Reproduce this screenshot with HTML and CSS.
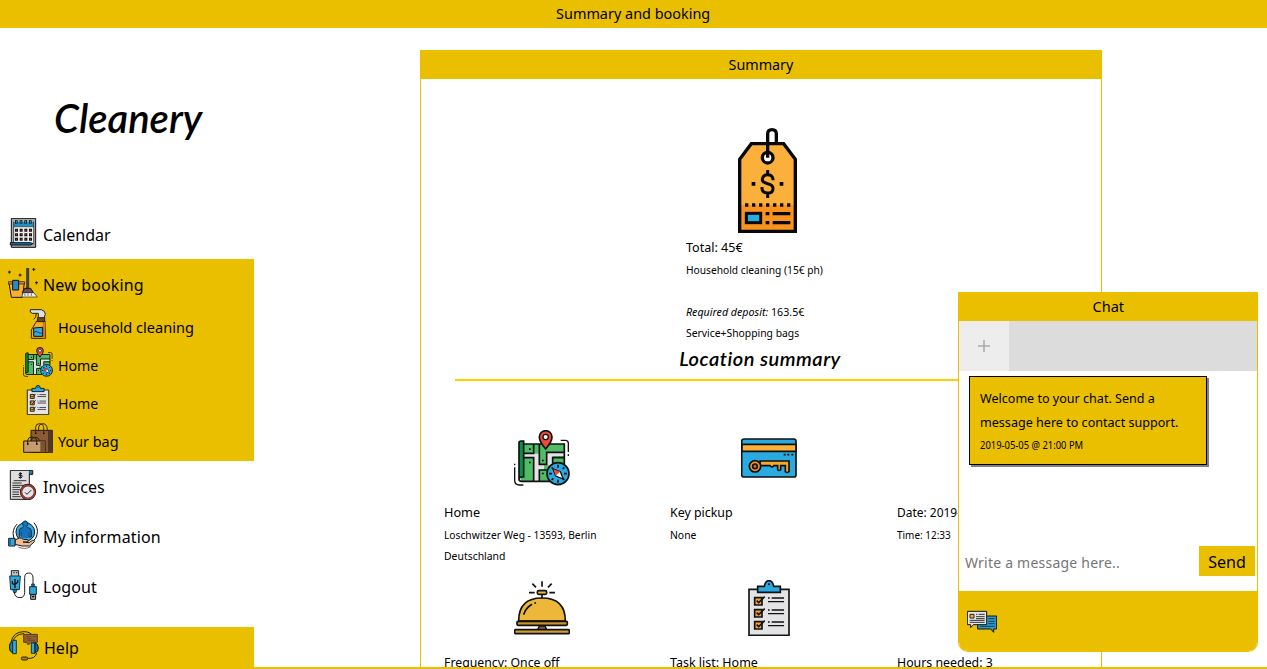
FILE: index.html
```html
<!DOCTYPE html>
<html lang="en">
<head>
<meta charset="utf-8">
<title>Summary and booking</title>
<link rel="stylesheet" href="styles.css">
</head>
<body>
<svg class="defs" width="0" height="0">
  <symbol id="map" viewBox="282 30 168 168">
    <path d="M302 72H433V184H302Z" fill="#50bc66"/>
    <path d="M311 101H358V132H378L382 98H434V108H398V136H372V149H358V184H341V113H311Z" fill="#e3e3e7"/>
    <path d="M297 68Q297 63 303 63H311V171H304Q298 172 297 177Z" fill="#079247"/>
    <g fill="none" stroke="#101010" stroke-width="5"><path d="M311 72H433V132M311 100H341V72M311 113H341V184M358 72V133H380V97H434M398 130V113H434M358 184V150H385M297 177V68Q297 63 303 63H311V171H304Q297 172 297 177Q297 184 304 184H390"/><path d="M422 61H436Q445 61 445 70V96M445 103V108M284 131V136M284 142V181Q284 195 298 195H310" stroke-width="4"/></g>
    <path d="M327 85h5v5h-5zM327 125h5v5h-5zM366 119h5v5h-5zM366 158h5v5h-5z"/>
    <path d="M377 87Q358 65 358 51A19 19 0 0 1 396 51Q396 65 377 87Z" fill="#e64c3c" stroke="#111" stroke-width="5"/><circle cx="377" cy="51" r="8" fill="#fff" stroke="#111" stroke-width="4"/>
    <circle cx="414" cy="161" r="33" fill="#29a9e1" stroke="#111" stroke-width="5"/><path d="M414 134v9M414 179v9M387 161h9M432 161h9M395 142l5 5M428 175l5 5M395 180l5-5M428 147l5-5" stroke="#111" stroke-width="5"/><path d="M399 147L421 155L430 177L407 168Z" fill="#fff" stroke="#111" stroke-width="4"/><path d="M400 148L421 155L407 167Z" fill="#e64c3c"/>
  </symbol>
  <symbol id="list" viewBox="243 480 168 168">
    <path d="M267 508H387V646H267Z" fill="#e4e4e6" stroke="#151515" stroke-width="5"/>
    <path d="M293 517V499H313Q316 482 327 482T341 499H361V517Z" fill="#29a9e1" stroke="#111" stroke-width="5"/><circle cx="327" cy="493" r="3"/>
    <g id="check"><path d="M284 533H306V555H284Z" fill="#f6a52d" stroke="#111" stroke-width="5"/><path d="M290 542L296 548L314 530" fill="none" stroke="#111" stroke-width="5"/><path d="M324 534h5M335 534h37M324 545h48" stroke="#111" stroke-width="4"/></g>
    <use href="#check" y="36"/><use href="#check" y="72"/>
  </symbol>
</svg>
<div class="page">
  <header class="topbar"><span class="t-top">Summary and booking</span></header>
  <div class="main">
    <nav class="sidebar">
      <div class="logo"><span class="t-logo">Cleanery</span></div>
      <a class="item">
        <svg viewBox="24 414 90 90"><path d="M34 415H107V502H34Z" fill="#aaa9a5" stroke="#111" stroke-width="3"/><path d="M41 425H101V494H41Z" fill="#eee"/><path d="M41 425H101V439H41Z" fill="#1b91c8"/><path d="M41 494V425M101 425V494M41 440H101" stroke="#111" stroke-width="2"/><path d="M49 421v10M63 421v10M77 421v10M91 421v10" stroke="#111" stroke-width="8"/><path d="M49 423v7M63 423v7M77 423v7M91 423v7" stroke="#299fd0" stroke-width="3"/><path d="M45 451H98M45 464H98M45 478H98" stroke="#151515" stroke-width="9" stroke-dasharray="9 5"/><path d="M48 451H98M48 464H98M48 478H98" stroke="#993d31" stroke-width="3" stroke-dasharray="3 11"/><path d="M31 488H92L99 491L92 495H31Z" fill="#0878bd" stroke="#111" stroke-width="3"/></svg>
        <span class="t-cal">Calendar</span></a>
      <div class="group">
        <a class="item">
          <svg viewBox="24 30 90 90"><path d="M27 75H73L67 118H34Z" fill="#f8af32" stroke="#211" stroke-width="3"/><path d="M25 71H74V78H25Z" fill="#e58726" stroke="#211" stroke-width="2"/><path d="M38 67H56V96H38Z" fill="#258bc4" stroke="#111" stroke-width="3"/><path d="M80 31H86V92H80Z" fill="#4e4a47" stroke="#181818" stroke-width="2"/><path d="M74 91H92L100 104H67Z" fill="#66524a" stroke="#211" stroke-width="3"/><path d="M69 104H101L112 117H65Z" fill="#eee" stroke="#222" stroke-width="2"/><path d="M75 106v8M84 106v8M94 106v8" stroke="#444" stroke-width="2"/><path d="M28 38v9M24 42h9M60 47v9M56 51h9M101 30v9M97 34h9M109 70v9M105 74h9" stroke="#211" stroke-width="3"/></svg>
          <span class="t-new">New booking</span></a>
        <a class="sub">
          <svg viewBox="69 152 90 90"><path d="M110 188H135L137 240H94V215Z" fill="#f5ae24" stroke="#2d210c" stroke-width="3"/><path d="M128 190H136V240H128Z" fill="#d47d18"/><path d="M113 177H134V190H113Z" fill="#76401c" stroke="#221" stroke-width="3"/><path d="M91 154H124Q137 158 136 168L132 178H115V165H97L91 161Z" fill="#dce0e3" stroke="#222" stroke-width="3"/><path d="M109 166Q108 180 101 183" fill="none" stroke="#332410" stroke-width="3"/><path d="M101 209L128 207V234H101Z" fill="#35a7dc" stroke="#111" stroke-width="3"/><path d="M102 222q7-6 13 0t13 0" fill="none" stroke="#173f5f" stroke-width="3"/></svg>
          <span class="t-house">Household cleaning</span></a>
        <a class="sub"><svg><use href="#map"/></svg><span class="t-home">Home</span></a>
        <a class="sub"><svg><use href="#list"/></svg><span class="t-home">Home</span></a>
        <a class="sub">
          <svg viewBox="69 237 90 90"><path d="M93 259H157V326H93Z" fill="#8b5b33" stroke="#211710" stroke-width="3"/><path d="M144 260H158V326H144Z" fill="#533522"/><path d="M107 269V250Q107 239 119 239T131 250V269M116 258V249Q118 239 128 239Q142 239 142 258" fill="none" stroke="#3b290f" stroke-width="3"/><path d="M71 291H136V325H71Z" fill="#c69b6d" stroke="#211710" stroke-width="3"/><path d="M121 292H136V325H121Z" fill="#795334"/><path d="M83 302V289Q84 279 96 279T110 289V302M94 290Q95 280 104 280Q117 280 119 290" fill="none" stroke="#29200e" stroke-width="3"/><path d="M81 300h5M108 300h5M105 268h5M129 268h5" stroke="#111" stroke-width="4"/></svg>
          <span class="t-bag">Your bag</span></a>
      </div>
      <a class="item">
        <svg viewBox="24 30 90 90"><path d="M31 31H98V43H88V118H31Z" fill="#dedede" stroke="#151515" stroke-width="3"/><path d="M88 43V35Q88 31 93 31T98 35V42Z" fill="#157fc3" stroke="#111" stroke-width="2"/><path d="M66 41Q57 37 57 43T62 46T66 50T56 52M61 37V55" fill="none" stroke="#111" stroke-width="3"/><path d="M41 62H79M37 69H65M37 76H75M37 82H60M37 89H60M37 96H57M37 103H57M37 110H62" stroke="#333" stroke-width="3"/><circle cx="84" cy="96" r="21" fill="#e5e5e5" stroke="#241717" stroke-width="7"/><circle cx="84" cy="96" r="20.5" fill="none" stroke="#b33a2e" stroke-width="4"/><path d="M75 97L81 103L94 90" fill="none" stroke="#222" stroke-width="3"/></svg>
        <span class="t-inv">Invoices</span></a>
      <a class="item">
        <svg viewBox="24 180 90 90"><circle cx="76" cy="216" r="28" fill="#32abe0" stroke="#161616" stroke-width="3"/><path d="M45 242Q34 219 44 202Q47 196 52 192M102 188Q116 205 111 224Q109 235 100 243" fill="none" stroke="#111" stroke-width="3"/><path d="M58 231V212Q58 204 68 203L71 199Q65 193 68 187Q76 178 83 187Q86 194 80 200L83 203Q94 204 94 213V231H86V215M66 231V215" fill="#1572b8" stroke="#143146" stroke-width="3"/><path d="M66 205H86V234H66Z" fill="#1572b8"/><path d="M45 240L57 234Q64 232 70 238L83 239Q86 242 83 246H69L87 248L98 241Q104 240 104 244L89 258H66L45 253Z" fill="#f3bd91" stroke="#181818" stroke-width="3"/><path d="M26 235H45V258H26Z" fill="#34a5d9" stroke="#181818" stroke-width="3"/><path d="M27 236H33V257H27Z" fill="#1672b7"/><path d="M55 261Q74 270 92 260" fill="none" stroke="#222" stroke-width="2"/></svg>
        <span class="t-info">My information</span></a>
      <a class="item">
        <svg viewBox="24 330 90 90"><path d="M43 388V397Q44 413 60 413Q74 413 74 397V353Q74 339 86 339Q99 339 99 354V376" fill="none" stroke="#222" stroke-width="3"/><path d="M34 332H56V350H34Z" fill="#bfc4c7" stroke="#222" stroke-width="3"/><path d="M40 338h4M48 338h4" stroke="#222" stroke-width="3"/><path d="M29 348H61L58 389H32Z" fill="#31a8dc" stroke="#173548" stroke-width="3"/><path d="M38 388H51L48 398H41Z" fill="#1974b0" stroke="#111" stroke-width="2"/><path d="M45 384V357M45 376L37 370V363M45 373L53 367V360" fill="none" stroke="#111" stroke-width="4"/><path d="M95 372H103V380H95Z" fill="#236ea0" stroke="#111" stroke-width="2"/><path d="M89 380H109V403H89Z" fill="#31a8dc" stroke="#162b38" stroke-width="3"/><path d="M92 404H107V418H92Z" fill="#aaa" stroke="#111" stroke-width="3"/><path d="M96 410h7" stroke="#111" stroke-width="4"/></svg>
        <span class="t-out">Logout</span></a>
      <a class="help">
        <svg viewBox="27 513 90 90"><path d="M33 547Q39 515 72 515Q92 514 105 535M39 545Q44 522 72 521" fill="none" stroke="#242017" stroke-width="3"/><path d="M71 523H112V547H93L85 555L79 547H71Z" fill="#8f5f31" stroke="#5a3a1c" stroke-width="3"/><path d="M79 530H92M81 536H94M99 530H107M83 541H104" stroke="#5e3c1b" stroke-width="2"/><path d="M38 544Q28 547 28 561T38 579Z" fill="#1c80bd" stroke="#111" stroke-width="3"/><path d="M38 541H49V581H38ZM94 549H105V580H94Z" fill="#35a8dc" stroke="#173344" stroke-width="3"/><path d="M105 548Q115 551 115 564T105 578Z" fill="#1471b0" stroke="#111" stroke-width="3"/><path d="M110 579Q106 597 82 595" fill="none" stroke="#222" stroke-width="3"/><rect x="64" y="591" width="19" height="9" rx="4" fill="#a87d25" stroke="#222" stroke-width="3"/></svg>
        <span class="t-help">Help</span></a>
    </nav>
    <section class="panel">
      <h2 class="bar"><span class="t-sum">Summary</span></h2>
      <div class="total">
        <svg viewBox="135 54 315 315"><path d="M244 101H341L376 148V364H209V148Z" fill="#fbb03b"/><path d="M209 285H376V364H209Z" fill="#f7931e"/><path d="M244 101H341L376 148V364H209V148Z" fill="none" stroke="#080808" stroke-width="10"/><circle cx="293" cy="143" r="16" fill="#fff" stroke="#080808" stroke-width="10"/><path d="M293 143V72Q293 59 306 59T319 72V100" fill="none" stroke="#080808" stroke-width="10"/><path d="M309 211V207Q307 194 293 194T277 207Q276 217 293 221T309 236Q309 249 293 249T276 236V231M293 180V194M293 249V264" fill="none" stroke="#080808" stroke-width="9"/><path d="M245 216h11v11h-11zM329 216h11v11h-11z"/><path d="M225 285H362" stroke="#080808" stroke-width="11" stroke-dasharray="10 11"/><rect x="229" y="310" width="43" height="28" fill="#29abe2" stroke="#080808" stroke-width="9"/><path d="M287 311h11M308 311h53M287 338h11M308 338h53" stroke="#080808" stroke-width="10"/></svg>
        <p class="lead"><span class="t-total">Total: 45€</span></p>
        <p class="small"><span class="t-hc">Household cleaning (15€ ph)</span></p>
        <p class="small deposit"><span class="t-dep"><em>Required deposit:</em> 163.5€</span></p>
        <p class="small"><span class="t-serv">Service+Shopping bags</span></p>
      </div>
      <h3 class="location"><span class="t-loc">Location summary</span></h3>
      <div class="grid">
        <article class="card">
          <svg><use href="#map"/></svg>
          <p class="lead"><span class="t-chome">Home</span></p>
          <p class="small"><span class="t-addr">Loschwitzer Weg - 13593, Berlin</span></p>
          <p class="small"><span class="t-de">Deutschland</span></p>
        </article>
        <article class="card">
          <svg viewBox="243 30 168 168"><rect x="245" y="57" width="163" height="114" rx="7" fill="#29abe2" stroke="#111" stroke-width="5"/><path d="M246 73H408V94H246Z" fill="#fbb03b" stroke="#111" stroke-width="5"/><path d="M371 104h6M382 104h6M394 104h6" stroke="#111" stroke-width="5"/><path d="M300 123H387V155Q381 160 376 155V137H362V149Q357 154 353 149V137H341Q335 145 330 137H301Z" fill="#f8a827" stroke="#111" stroke-width="5"/><circle cx="285" cy="139" r="17" fill="#f8931e" stroke="#111" stroke-width="5"/><circle cx="285" cy="139" r="7" fill="#db652a" stroke="#111" stroke-width="5"/></svg>
          <p class="lead"><span class="t-key">Key pickup</span></p>
          <p class="small"><span class="t-none">None</span></p>
        </article>
        <article class="card">
          <svg></svg>
          <p class="lead"><span class="t-date">Date: 2019-05-05</span></p>
          <p class="small"><span class="t-time">Time: 12:33</span></p>
        </article>
        <article class="card">
          <svg viewBox="282 30 168 168"><path d="M366 34V50M337 41L348 52M395 41L384 52M327 68H344M388 68H405M366 74V85" stroke="#111" stroke-width="5"/><rect x="352" y="62" width="28" height="11" rx="4" fill="#edb839" stroke="#111" stroke-width="5"/><path d="M296 153Q296 84 366 84T436 153Z" fill="#edb839" stroke="#111" stroke-width="5"/><path d="M311 134Q317 114 336 103M343 100L348 98" fill="none" stroke="#111" stroke-width="5"/><rect x="291" y="154" width="151" height="12" rx="3" fill="#c99227" stroke="#111" stroke-width="5"/><path d="M358 168H375L380 179H353Z" fill="#8d5a38" stroke="#111" stroke-width="4"/><rect x="284" y="179" width="164" height="12" rx="3" fill="#d49d30" stroke="#111" stroke-width="5"/></svg>
          <p class="lead"><span class="t-freq">Frequency: Once off</span></p>
        </article>
        <article class="card">
          <svg><use href="#list"/></svg>
          <p class="lead"><span class="t-task">Task list: Home</span></p>
        </article>
        <article class="card">
          <svg></svg>
          <p class="lead"><span class="t-hours">Hours needed: 3</span></p>
        </article>
      </div>
    </section>
  </div>
  <aside class="chat">
    <h2 class="bar"><span class="t-chat">Chat</span></h2>
    <div class="tabs"><button class="add"><svg viewBox="0 0 12 12"><path d="M6 0V12M0 6H12" stroke="#aaa" stroke-width="1.5"/></svg></button></div>
    <div class="messages">
      <div class="message">
        <p><span class="t-m1">Welcome to your chat. Send a</span></p>
        <p><span class="t-m2">message here to contact support.</span></p>
        <time><span class="t-stamp">2019-05-05 @ 21:00 PM</span></time>
      </div>
    </div>
    <div class="compose"><span class="t-ph">Write a message here..</span><button class="send"><span class="t-send">Send</span></button></div>
    <div class="foot"><svg viewBox="51 381 90 90"><path d="M83 408H140V447H131V457L122 447H83Z" fill="#2a9bcc" stroke="#111" stroke-width="3"/><path d="M115 416H134M115 424H134M115 431H134M90 439H134" stroke="#153c50" stroke-width="3"/><path d="M52 394H110V434H70L62 443V434H52Z" fill="#e5e4e5" stroke="#111" stroke-width="3"/><path d="M60 403H72V414H60Z" fill="#f8ad38" stroke="#222" stroke-width="3"/><path d="M78 403H82M86 403H104M78 410H104M78 416H104M59 421H104M59 427H104" stroke="#333" stroke-width="3"/></svg></div>
  </aside>
</div>
</body>
</html>
```
FILE: styles.css
```css
* { box-sizing: border-box; }
body, p, h2, h3 { margin: 0; font-weight: 400; }
body { font-family: "Noto Sans", sans-serif; color: #000; background: #fff; }
.defs { display: block; position: absolute; }
.page { position: relative; width: 1267px; height: 669px; overflow: hidden; display: flex; flex-direction: column; border-bottom: 2px solid #eabf00; }
.topbar { height: 28px; flex: none; background: #eabf00; text-align: center; font-size: 15px; line-height: 27px; }
.main { display: flex; flex: 1; min-height: 0; }
span { display: inline-block; white-space: nowrap; transform-origin: left center; }

.sidebar { width: 254px; display: flex; flex-direction: column; }
.logo { height: 181px; flex: none; padding-top: 63px; padding-left: 54px; font: italic 600 40px/54px Lato, sans-serif; }
.item { display: flex; flex: none; height: 50px; padding: 9px 0 0 8px; gap: 5px; font-size: 16px; line-height: 34px; }
.sidebar svg { width: 30px; height: 30px; flex: none; }
.group { background: #eabf00; height: 202px; flex: none; }
.sub { display: flex; height: 38px; padding-left: 23px; gap: 5px; font-size: 15px; line-height: 37px; }
.help { display: flex; height: 40px; margin-top: auto; padding: 4px 0 0 9px; gap: 5px; background: #eabf00; font-size: 16px; line-height: 34px; }

.panel { width: 682px; height: 660px; margin: 22px 0 0 166px; flex: none; border: 1px solid #eabf00; border-top: 0; }
.bar { height: 29px; background: #eabf00; text-align: center; font-size: 15px; line-height: 29px; }
.total { padding: 49px 0 0 265px; }
.total svg { display: block; width: 105px; height: 105px; margin-left: 29px; }
.lead { font-size: 13px; line-height: 24px; height: 26px; padding-top: 2px; }
.small { font-size: 11.5px; line-height: 21px; height: 21px; }
.deposit { margin-top: 21px; }
.location { margin: 1px 34px 0; padding-right: 2px; height: 37px; border-bottom: 2px solid #fdd000; text-align: center; font: italic 600 20px/28px Lato, sans-serif; }
.grid { display: grid; grid-template-columns: 226px 227px 226px; grid-auto-rows: 150px; padding: 49px 0 0 23px; }
.card svg { display: block; width: 56px; height: 56px; margin: 0 0 12px 70px; }
.card:nth-child(3n + 2) svg { margin-left: 71px; }

.chat { position: absolute; left: 958px; top: 292px; width: 300px; height: 360px; background: #fff; border: 1px solid #eabf00; border-top: 0; border-radius: 0 0 10px 10px; overflow: hidden; display: flex; flex-direction: column; }
.tabs { height: 50px; background: #dcdcdc; }
.add { width: 50px; height: 50px; padding: 0; border: 0; background: #ededed; }
.add svg { display: block; width: 12px; height: 12px; margin: 0 auto; }
.messages { padding: 5px 10px; flex: 1; }
.message { width: 238px; height: 89px; padding: 9px 10px; background: #eabf00; border: 1px solid #000; box-shadow: 2px 2px 0 #808080; font-size: 13px; line-height: 24px; }
.message p { height: 24px; }
.message time { display: block; font-size: 10px; line-height: 22px; }
.compose { display: flex; justify-content: space-between; height: 45px; padding: 0 2px 0 6px; font-size: 14px; line-height: 33px; color: #757575; }
.send { width: 56px; height: 30px; padding: 0; border: 0; background: #eabf00; color: #000; font: 16px/32px "Noto Sans", sans-serif; }
.foot { height: 60px; padding: 16px 8px; background: #eabf00; }
.foot svg { width: 30px; height: 30px; display: block; }

/* Optical width of each label */
.t-top { transform: scaleX(.962); transform-origin: center; }
.t-sum { transform: scaleX(.955); transform-origin: center; }
.t-chat { transform: scaleX(.97); transform-origin: center; }
.t-new { letter-spacing: .15px; }
.t-info { letter-spacing: .12px; }
.t-out { letter-spacing: .1px; }
.t-house { transform: scaleX(.97); }
.t-home { transform: scaleX(.945); }
.t-bag { transform: scaleX(.96); }
.t-total { transform: scaleX(.965); }
.t-hc { transform: scaleX(.888); }
.t-dep { transform: scaleX(.928); }
.t-serv { transform: scaleX(.9); }
.t-loc { letter-spacing: .5px; }
.t-chome { transform: scaleX(.975); }
.t-addr { transform: scaleX(.89); }
.t-de { transform: scaleX(.905); }
.t-key { transform: scaleX(.953); }
.t-none { transform: scaleX(.9); }
.t-date { transform: scaleX(.92); }
.t-time { transform: scaleX(.865); }
.t-freq { transform: scaleX(.945); }
.t-task { transform: scaleX(.96); }
.t-hours { transform: scaleX(.95); }
.t-m1 { transform: scaleX(.966); }
.t-m2 { transform: scaleX(.967); }
.t-stamp { transform: scaleX(.94); }
.t-ph { letter-spacing: .22px; }
```
